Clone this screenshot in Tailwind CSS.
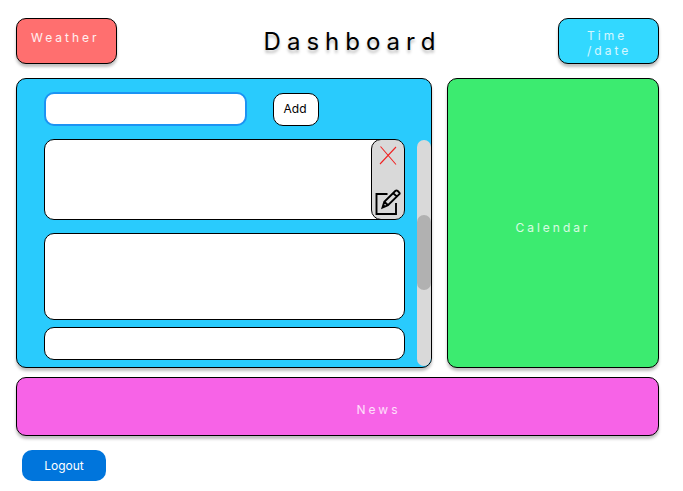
<!DOCTYPE html>
<html lang="en">
<head>
<meta charset="utf-8">
<meta name="viewport" content="width=device-width, initial-scale=1">
<title>Dashboard</title>
<script src="https://cdn.jsdelivr.net/npm/@tailwindcss/browser@4"></script>
</head>
<body class="bg-white pl-4 pr-6 pt-[18px] pb-2 font-['Inter','Liberation_Sans',sans-serif] text-xs text-black">
  <header class="flex items-start justify-between">
    <section class="h-[46px] w-[101px] rounded-[10px] border border-black bg-[#ff6f6f] pl-3.5 pt-[11px] leading-[15px] tracking-[3px] text-white/90 shadow-[0_3px_3px_rgba(0,0,0,0.25)]">Weather</section>
    <h1 class="pt-2 pl-[30px] text-2xl tracking-[6px] text-shadow-[0_3px_3px_rgba(0,0,0,0.25)]">Dashboard</h1>
    <section class="h-[46px] w-[101px] rounded-[10px] border border-black bg-[#32d8ff] pl-7 pt-[9px] leading-[15px] tracking-[3px] text-white/80 shadow-[0_3px_3px_rgba(0,0,0,0.25)]">Time<br>/date</section>
  </header>

  <main>
    <div class="mt-3.5 grid grid-cols-[416fr_212fr] gap-[15px]">
      <section class="flex overflow-hidden rounded-[10px] border border-black bg-[#29cbfd] pl-[27px] shadow-[0_3px_3px_rgba(0,0,0,0.25)]" aria-label="Tasks">
        <div class="min-w-0 flex-1 pb-[7px] pt-[13px]">
          <form class="flex items-center gap-[26px]">
            <input type="text" aria-label="New task" class="h-[34px] w-[203px] rounded-[10px] border-2 border-[#1c93f3] bg-white px-2 outline-none">
            <button type="button" class="h-[33px] w-[46px] rounded-[10px] border border-black bg-white pr-0.5">Add</button>
          </form>
          <ul class="mt-[13px]">
            <li class="flex h-[81px] justify-end overflow-hidden rounded-[10px] border border-black bg-white">
              <div class="-my-px -mr-px flex w-[34px] flex-col items-center justify-between rounded-[10px] border border-black bg-[#d9d9d9] pb-1 pt-1.5">
                <button type="button" aria-label="Delete task">
                  <svg class="block h-[19px] w-[18px]" viewBox="0 0 18 19" fill="none" stroke="#ef2424" stroke-width="1.1"><path d="M1.5 .5 17 18.5M17 1 1 18"/></svg>
                </button>
                <button type="button" aria-label="Edit task">
                  <svg class="block h-[26px] w-[26px]" viewBox="0 0 26 26" fill="none" stroke="#000" stroke-width="1.9"><path d="M12.5 5H1.500V25H21V14"/><path d="M7.500 18.500 9.300 12.800 20.500 1.800Q21.500 1 22.500 1.800L24.300 3.600Q25 4.400 24.300 5.200L13 16.300ZM9.300 12.800 13 16.300M18.200 4.100 22 7.700M7.500 18.500 9.500 16.500"/></svg>
                </button>
              </div>
            </li>
            <li class="mt-[13px] h-[87px] rounded-[10px] border border-black bg-white"></li>
            <li class="mt-[7px] h-[33px] rounded-[10px] border border-black bg-white"></li>
          </ul>
        </div>
        <div class="ml-3 mb-px mt-[61px] w-3.5 rounded-full bg-[#d9d9d9] pt-[75px]" role="scrollbar" aria-label="Task list" aria-valuenow="50">
          <div class="h-[75px] rounded-full bg-[#b1b1b1]"></div>
        </div>
      </section>

      <section class="flex items-center justify-center rounded-[10px] border border-black bg-[#3ceb70] pt-2.5 tracking-[3px] text-white/80 shadow-[0_3px_3px_rgba(0,0,0,0.25)]">Calendar</section>
    </div>

    <section class="mt-[9px] flex h-[59px] items-center justify-center rounded-[10px] border border-black bg-[#f763e7] pl-[82px] pt-1.5 tracking-[3px] text-white/80 shadow-[0_3px_3px_rgba(0,0,0,0.25)]">News</section>
  </main>

  <button type="button" class="ml-1.5 mt-3.5 h-[31px] w-[84px] rounded-[10px] bg-[#0075dc] text-white">Logout</button>
</body>
</html>
